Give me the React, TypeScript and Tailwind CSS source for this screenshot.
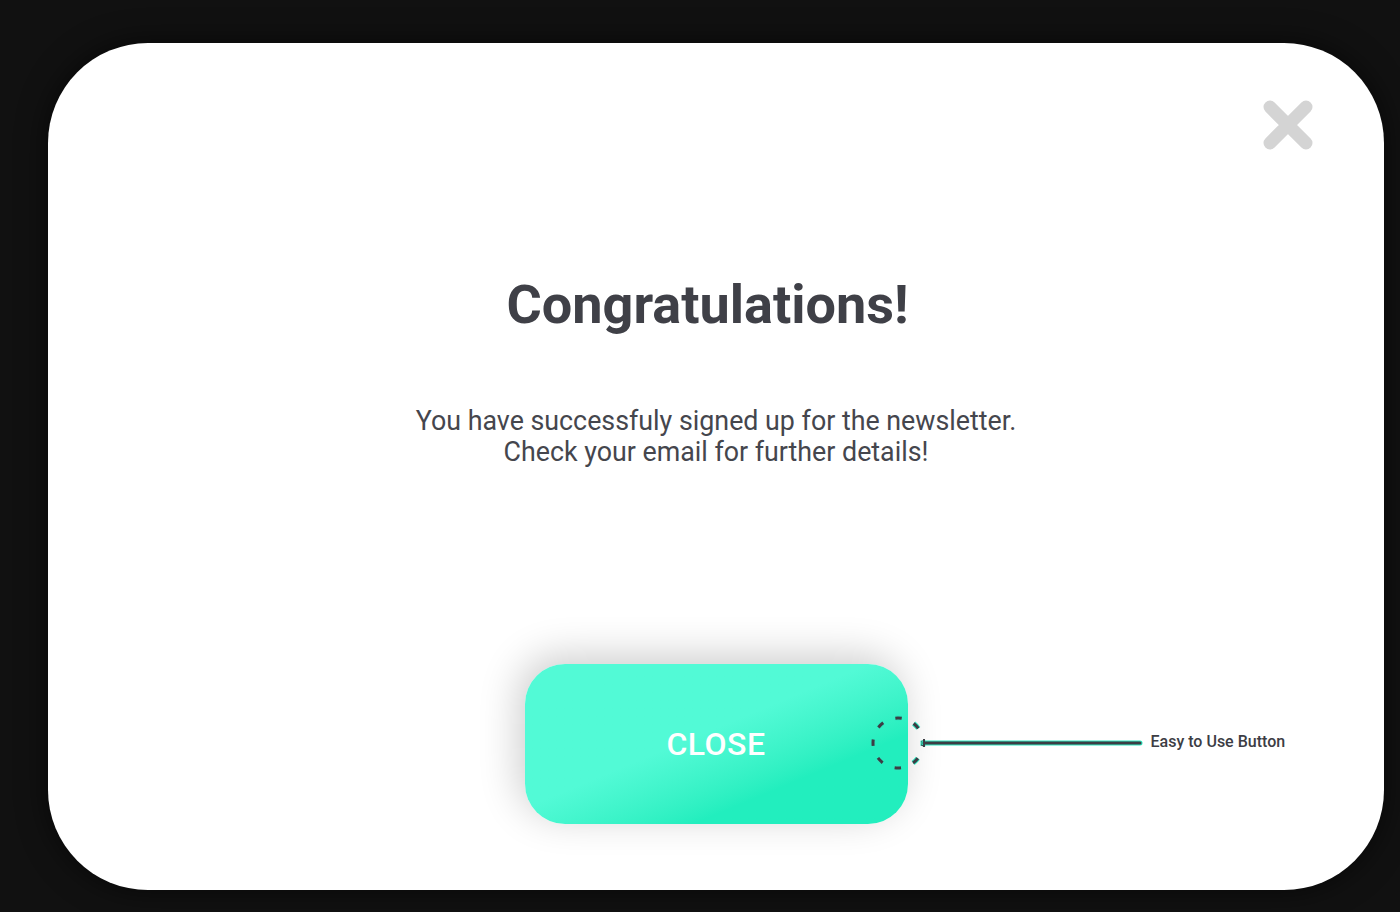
export default function App() {
  return (
    <div
      className="w-[1400px] h-[912px] bg-[#111111] overflow-hidden"
      style={{ fontFamily: "Roboto, 'Noto Sans', sans-serif" }}
    >
      {/* Modal card */}
      <div className="ml-[48px] mt-[43px] w-[1336px] h-[847px] bg-white rounded-[100px] shadow-[0_0_30px_rgba(0,0,0,0.6)] flex flex-col items-center">
        {/* Close icon row */}
        <div className="w-full flex justify-end pt-[57px] pr-[71px]">
          <svg width="50" height="50" viewBox="0 0 50 50">
            <path
              d="M7 7 L43 43 M43 7 L7 43"
              stroke="#d4d4d4"
              strokeWidth="13"
              strokeLinecap="round"
            />
          </svg>
        </div>

        <h1 className="mt-[128px] mr-[17px] text-[54px] leading-[54px] font-bold text-[#3f4047]">
          Congratulations!
        </h1>

        <p className="mt-[74px] text-[26.8px] leading-[31px] text-[#45464d] text-center">
          You have successfuly signed up for the newsletter.
          <br />
          Check your email for further details!
        </p>

        {/* Button with annotation */}
        <div className="relative mt-[196px]">
          <button className="w-[383px] h-[160px] rounded-[40px] bg-linear-to-br from-[#52fad6] from-45% to-[#22eebe] to-72% shadow-[-6px_-8px_40px_rgba(0,0,0,0.2)] text-white text-[32px] font-medium tracking-[0.5px]">
            CLOSE
          </button>

          <svg
            className="absolute left-[342px] top-[48px]"
            width="290"
            height="64"
            viewBox="0 0 290 64"
          >
            <circle
              cx="31"
              cy="31"
              r="25"
              fill="none"
              stroke="#2ee8c0"
              strokeWidth="5"
              strokeDasharray="6.6 13"
              strokeDashoffset="3.3"
            />
            <circle
              cx="31"
              cy="31"
              r="25"
              fill="none"
              stroke="#3c3d44"
              strokeWidth="3"
              strokeDasharray="6.6 13"
              strokeDashoffset="3.3"
            />
            <line x1="57" y1="31" x2="273" y2="31" stroke="#2ee8c0" strokeWidth="5" strokeLinecap="round" />
            <line x1="57" y1="31" x2="273" y2="31" stroke="#3c3d44" strokeWidth="3" strokeLinecap="round" />
            <line x1="57" y1="27" x2="57" y2="35" stroke="#3c3d44" strokeWidth="2" />
          </svg>

          <span className="absolute left-[626px] top-[68px] whitespace-nowrap text-[16px] leading-[19px] font-medium text-[#3c3d44]">
            Easy to Use Button
          </span>
        </div>
      </div>
    </div>
  );
}
